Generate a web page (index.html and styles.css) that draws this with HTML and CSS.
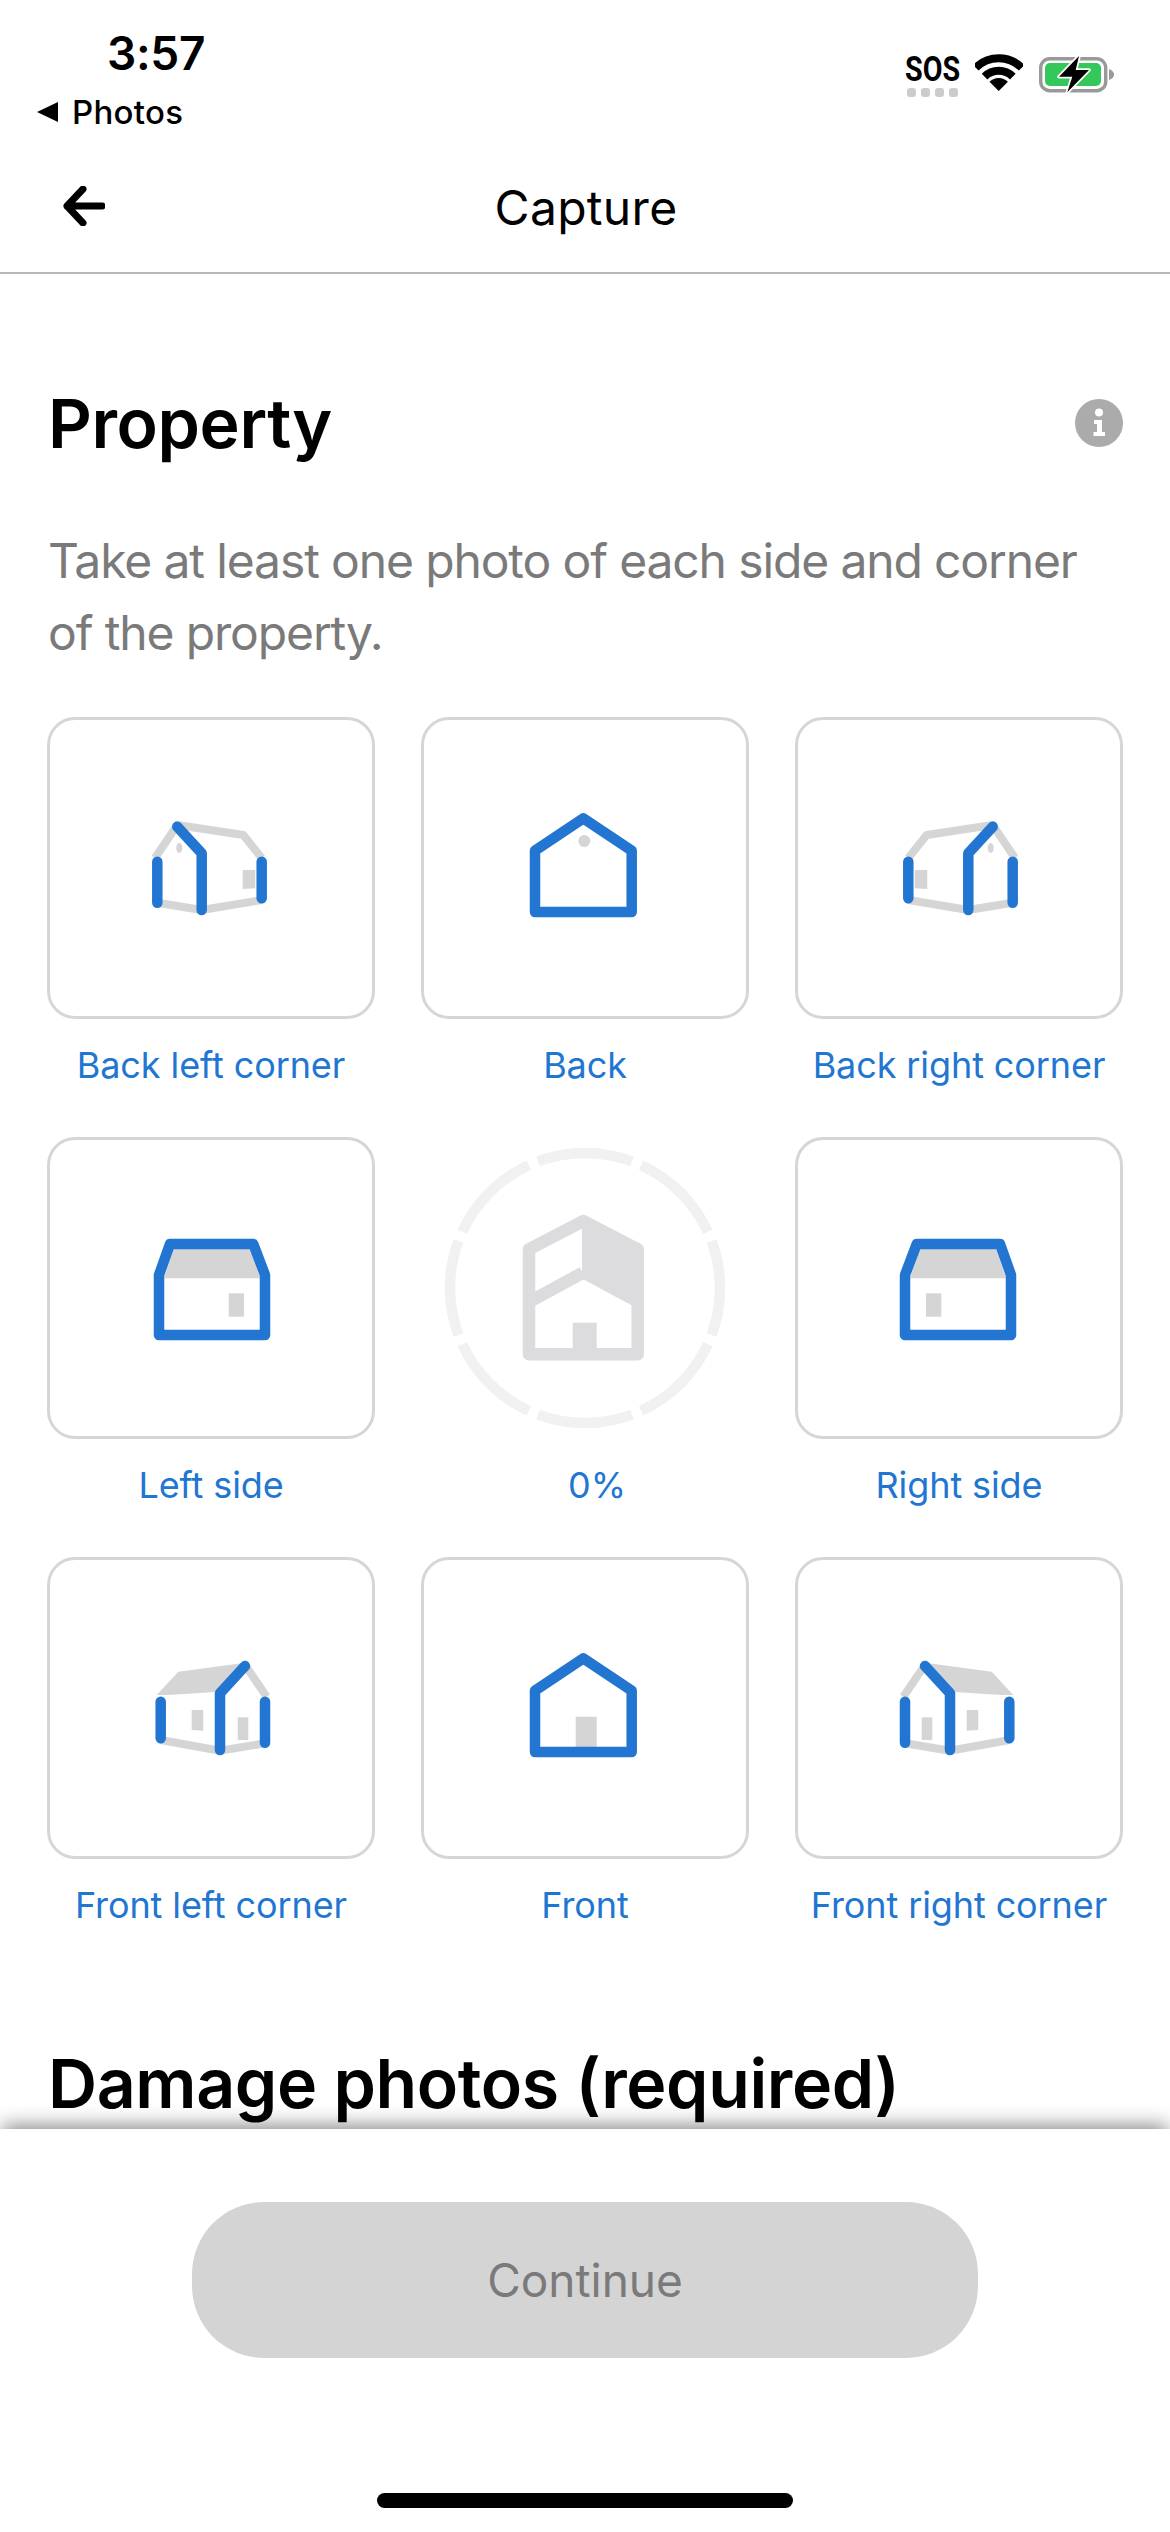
FILE: index.html
```html
<!DOCTYPE html>
<html>
<head>
<meta charset="utf-8">
<title>Capture</title>
<link rel="stylesheet" href="styles.css">
</head>
<body>
<svg class="defs" width="0" height="0">
 <defs>
  <symbol id="corner-back" viewBox="3 3 322 296">
   <path class="grey-line" d="M108 141 L130.3 108 L196.3 118 L214.7 141"/>
   <path class="grey-line" d="M110.3 185.7 L154.7 193 L214.7 183"/>
   <path class="grey-fill" d="M195.7 153 H208.3 V171.3 L195.7 172 Z"/>
   <ellipse class="grey-fill" cx="132.3" cy="131" rx="3" ry="5"/>
   <path class="blue-line" d="M110.3 144.7 V185.7"/>
   <path class="blue-line" d="M214.7 144.7 V181.3"/>
   <path class="blue-line" d="M130.3 109.7 L154.7 136.3 V193"/>
  </symbol>
  <symbol id="corner-front" viewBox="3 3 322 296">
   <path class="grey-fill" d="M130 105.7 L196.7 114.7 L218.3 138 L206.7 138 L155 134.7 Z"/>
   <path class="grey-line" d="M108.3 139.7 L130 108"/>
   <path class="grey-line" d="M110 186.3 L155 193.7 L214.3 183"/>
   <path class="grey-fill" d="M126.7 160.3 H137.3 V183 H126.7 Z"/>
   <path class="grey-fill" d="M171.7 153 H183.3 V173 L171.7 173.7 Z"/>
   <path class="blue-line" d="M110 144.7 V185.7"/>
   <path class="blue-line" d="M214.3 144.7 V181.3"/>
   <path class="blue-line" d="M130 109 L155 136.3 V193"/>
  </symbol>
  <symbol id="side" viewBox="3 3 322 296">
   <path class="grey-fill" d="M117 141.3 L127 111.3 H203 L213 141.3 Z"/>
   <path class="grey-fill" d="M181.7 156.3 H197 V179.7 H181.7 Z"/>
   <path class="blue-line" d="M112 198 V138 L123 107 H206.3 L218 138 V198 Z"/>
  </symbol>
 </defs>
</svg>

<div class="status">
 <div class="status-left">
  <div class="time">3:57</div>
  <div class="return"><span class="return-arrow"></span>Photos</div>
 </div>
 <div class="status-right">
  <div class="sos">
   <span class="sos-text">SOS</span>
   <div class="dots"><i></i><i></i><i></i><i></i></div>
  </div>
  <svg class="wifi" width="48" height="37" viewBox="0 0 48 37">
   <path d="M0.7 13.7 A32.5 32.5 0 0 1 46.7 13.7" fill="none" stroke="#000" stroke-width="8"/>
   <path d="M9.6 22.6 A20 20 0 0 1 37.8 22.6" fill="none" stroke="#000" stroke-width="8"/>
   <path d="M23.7 37 L14.5 27.8 A13 13 0 0 1 32.9 27.8 Z" fill="#000"/>
  </svg>
  <svg class="battery" width="76" height="40" viewBox="0 0 76 40">
   <rect x="1.7" y="3.7" width="65" height="32" rx="9" fill="none" stroke="#999" stroke-width="3.4"/>
   <rect x="6" y="8" width="56" height="23" rx="5" fill="#34c759"/>
   <path d="M70 14 Q75 16 75 19.5 Q75 23 70 25 Z" fill="#999"/>
   <path d="M40 1 L20 21.7 H33.3 L28.3 37.3 L50 15 H36.7 Z" fill="#000" stroke="#fff" stroke-width="3.5" stroke-linejoin="round" paint-order="stroke"/>
  </svg>
 </div>
</div>

<header class="nav">
 <svg class="back-arrow" width="42" height="40" viewBox="0 0 42 40">
  <path d="M20 3 L4 20 L20 37 M4 20 H39" fill="none" stroke="#000" stroke-width="7" stroke-linecap="round" stroke-linejoin="round"/>
 </svg>
 <div class="nav-title">Capture</div>
</header>

<main class="content">
 <div class="title-row">
  <h1>Property</h1>
  <svg class="info" width="48" height="48" viewBox="0 0 48 48">
   <circle cx="24" cy="24" r="24" fill="#ababab"/>
   <circle cx="24" cy="13.5" r="4" fill="#fff"/>
   <path d="M19 21 H27 V33 H30 V37 H18.500 V33 H22 V25 H19 Z" fill="#fff"/>
  </svg>
 </div>
 <p class="intro">Take at least one photo of each side and corner of the property.</p>

 <div class="shots">
  <div class="shot">
   <div class="card"><svg class="shot-icon"><use href="#corner-back"/></svg></div>
   <div class="label">Back left corner</div>
  </div>
  <div class="shot">
   <div class="card">
    <svg class="shot-icon" viewBox="3 3 322 296">
     <path class="blue-line" d="M114 195 V133.700 L162.300 101.300 L210.700 133.700 V195 Z"/>
     <circle class="grey-fill" cx="163.300" cy="124" r="6"/>
    </svg>
   </div>
   <div class="label">Back</div>
  </div>
  <div class="shot">
   <div class="card"><svg class="shot-icon flip"><use href="#corner-back"/></svg></div>
   <div class="label">Back right corner</div>
  </div>

  <div class="shot">
   <div class="card"><svg class="shot-icon"><use href="#side"/></svg></div>
   <div class="label">Left side</div>
  </div>
  <div class="shot">
   <svg class="progress" viewBox="0 0 328 302">
    <circle class="ring" cx="164" cy="151" r="135" pathLength="848"/>
    <path class="house-line" d="M108 112.300 L162.300 84 L216.700 112.300 V217.300 H108 Z"/>
    <path class="house-line" d="M108 165 L161.700 135.700"/>
    <path class="house-fill" d="M161 84 L222 112 V168 H210 L162.300 142.300 L161 141.300 Z"/>
    <path class="house-fill" d="M151.700 185.700 H175.700 V215 H151.700 Z"/>
   </svg>
   <div class="label percent">0%</div>
  </div>
  <div class="shot">
   <div class="card"><svg class="shot-icon flip"><use href="#side"/></svg></div>
   <div class="label">Right side</div>
  </div>

  <div class="shot">
   <div class="card"><svg class="shot-icon flip"><use href="#corner-front"/></svg></div>
   <div class="label">Front left corner</div>
  </div>
  <div class="shot">
   <div class="card">
    <svg class="shot-icon" viewBox="3 3 322 296">
     <path class="grey-fill" d="M154.700 159.700 H175.700 V191 H154.700 Z"/>
     <path class="blue-line" d="M114 195 V133.700 L162.300 101.300 L210.700 133.700 V195 Z"/>
    </svg>
   </div>
   <div class="label">Front</div>
  </div>
  <div class="shot">
   <div class="card"><svg class="shot-icon"><use href="#corner-front"/></svg></div>
   <div class="label">Front right corner</div>
  </div>
 </div>

 <h1 class="damage">Damage photos (required)</h1>
</main>

<footer class="footer">
 <button class="continue">Continue</button>
 <div class="home-bar"></div>
</footer>
</body>
</html>
```

FILE: styles.css
```css
* {
 box-sizing: border-box;
}
html, body {
 margin: 0;
 padding: 0;
}
body {
 background: #fff;
 color: #000;
 display: flex;
 flex-direction: column;
 font-family: Inter, "Liberation Sans", sans-serif;
 height: 2532px;
 overflow: hidden;
 width: 1170px;
}
.defs {
 display: block;
 height: 0;
 overflow: hidden;
}

/* status bar */
.status {
 display: flex;
 flex: none;
 height: 140px;
 justify-content: space-between;
 padding: 30px 55px 0 37px;
}
.time {
 font-size: 46px;
 font-weight: 600;
 letter-spacing: -0.3px;
 line-height: 46px;
 margin-left: 70px;
}
.return {
 align-items: center;
 display: flex;
 font-size: 33px;
 font-weight: 500;
 letter-spacing: 0.3px;
 line-height: 46px;
 margin-top: 13px;
}
.return-arrow {
 border-bottom: 10px solid transparent;
 border-right: 21px solid #000;
 border-top: 10px solid transparent;
 display: block;
 margin-right: 14px;
}
.status-right {
 align-items: flex-start;
 display: flex;
 gap: 16px;
 padding-top: 24px;
}
.sos {
 margin-top: 3px;
 width: 54px;
}
.sos-text {
 display: block;
 font-family: Roboto, sans-serif;
 font-size: 35px;
 font-weight: 700;
 line-height: 25px;
 transform: scaleX(0.82);
 transform-origin: left;
 white-space: nowrap;
 width: max-content;
}
.dots {
 display: flex;
 gap: 5px;
 margin-top: 6px;
 padding-left: 2px;
}
.dots i {
 background: #ccc;
 border-radius: 3px;
 display: block;
 height: 9px;
 width: 9px;
}
.battery {
 margin-top: 1px;
}

/* nav */
.nav {
 align-items: center;
 border-bottom: 2px solid #b8b8b8;
 display: grid;
 flex: none;
 grid-template-columns: 1fr auto 1fr;
 height: 134px;
 padding-left: 63px;
}
.nav-title {
 font-size: 48px;
 letter-spacing: 0.3px;
 line-height: 60px;
 margin-left: -61px;
 padding-top: 3px;
}

/* content */
.content {
 flex: 1;
 min-height: 0;
 overflow: hidden;
 padding: 109px 47px 0 48px;
}
.title-row {
 align-items: center;
 display: flex;
 justify-content: space-between;
}
h1 {
 font-size: 68px;
 font-weight: 600;
 letter-spacing: -0.4px;
 line-height: 80px;
 margin: 0;
}
.intro {
 color: #7a7a7a;
 font-size: 48px;
 letter-spacing: -1.13px;
 line-height: 72px;
 margin: 62px 0 0 0;
}
.shots {
 display: grid;
 gap: 50px 46px;
 grid-template-columns: repeat(3, 328px);
 margin: 48px 0 0 -1px;
}
.shot {
 display: flex;
 flex-direction: column;
}
.card {
 border: 3px solid #d6d6d6;
 border-radius: 28px;
 height: 302px;
 width: 328px;
}
.shot-icon {
 display: block;
 height: 296px;
 width: 322px;
}
.flip {
 transform: scaleX(-1);
}
.progress {
 display: block;
 height: 302px;
 width: 328px;
}
.label {
 color: #2176d2;
 font-size: 36px;
 letter-spacing: -0.1px;
 line-height: 44px;
 margin-top: 24px;
 text-align: center;
 white-space: nowrap;
}
.percent {
 padding-left: 24px;
}
.damage {
 margin-top: 116px;
 white-space: nowrap;
}

/* icon strokes */
.grey-line {
 fill: none;
 stroke: #d5d5d5;
 stroke-linejoin: round;
 stroke-width: 8;
}
.grey-fill {
 fill: #d5d5d5;
}
.blue-line {
 fill: none;
 stroke: #2276d2;
 stroke-linecap: round;
 stroke-linejoin: round;
 stroke-width: 10.5;
}
.ring {
 fill: none;
 stroke: #f1f1f1;
 stroke-dasharray: 96 10;
 stroke-dashoffset: 48;
 stroke-width: 10.5;
}
.house-line {
 fill: none;
 stroke: #dcdcde;
 stroke-linejoin: round;
 stroke-width: 12.5;
}
.house-fill {
 fill: #dcdcde;
}

/* footer */
.footer {
 align-items: center;
 background: #fff;
 box-shadow: 0 -6px 18px -2px rgba(0,0,0,0.45);
 display: flex;
 flex: none;
 flex-direction: column;
 height: 403px;
 padding-top: 73px;
 position: relative;
}
.continue {
 background: #d4d4d4;
 border: 0;
 border-radius: 72px;
 color: #7a7a7a;
 font-family: inherit;
 font-size: 46px;
 height: 156px;
 padding: 0;
 width: 786px;
}
.home-bar {
 background: #000;
 border-radius: 8px;
 height: 15px;
 margin-top: 135px;
 width: 416px;
}
```
